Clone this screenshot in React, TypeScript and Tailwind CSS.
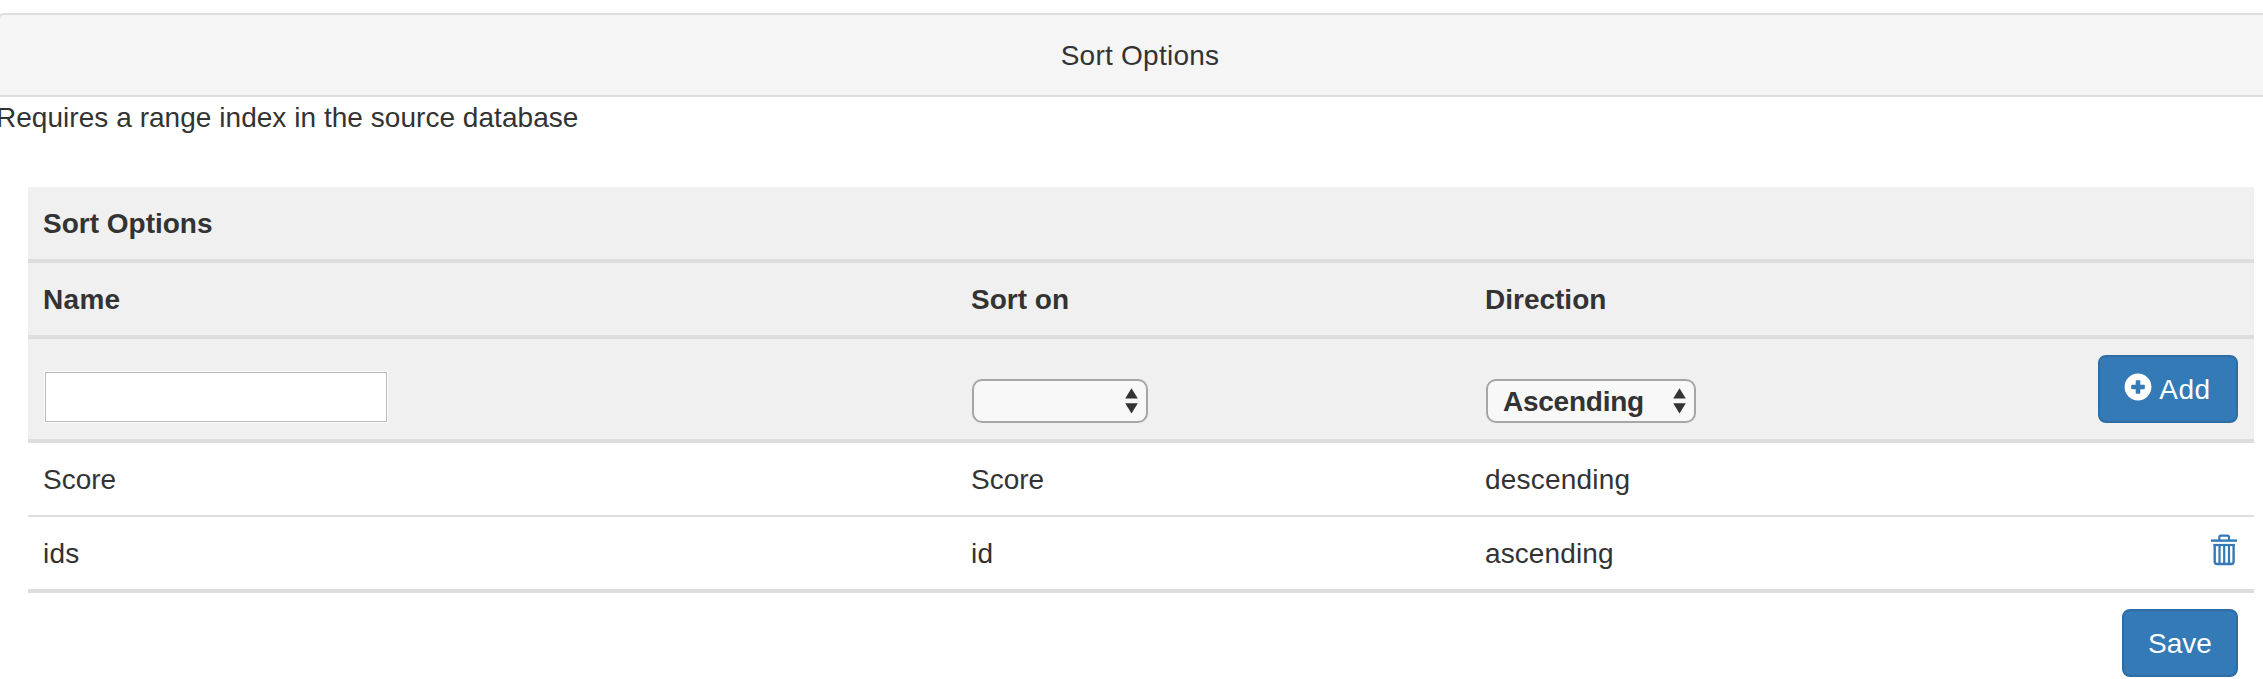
import type { ReactNode } from "react";

const GRID = "grid grid-cols-[928px_514px_1fr_auto] pr-4 pl-[15px]";

function UpDown() {
  return (
    <svg width="13" height="26" viewBox="0 0 13 26" fill="#333">
      <path d="M6.5 0.3 12.800 10.400H.2z" />
      <path d="M6.5 25.500 12.800 15.300H.2z" />
    </svg>
  );
}

function PlusCircle() {
  return (
    <svg className="mb-[4px]" width="28" height="28" viewBox="0 0 28 28">
      <circle cx="14" cy="14" r="13.4" fill="#fff" />
      <path
        d="M11.700 8q0-.8.8-.8h3q.8 0 .8.8v3.700h3.700q.8 0 .8.8v3q0 .8-.8.8h-3.700v3.700q0 .8-.8.8h-3q-.8 0-.8-.8v-3.700h-3.700q-.8 0-.8-.8v-3q0-.8.8-.8h3.700z"
        fill="#337ab7"
      />
    </svg>
  );
}

function Trash() {
  return (
    <svg width="26" height="32" viewBox="0 0 26 32" fill="none" stroke="#337ab7" strokeWidth="2.2">
      <path d="M0 6.600h26" strokeWidth="2.400" />
      <path d="M8.300 6V3.400Q8.300 1.700 10 1.700h6.300q1.700 0 1.700 1.700V6" />
      <path d="M2.600 11h21.200" />
      <path d="M3.700 10v17.500q0 2.500 2.300 2.500h14.300q2.300 0 2.300-2.500V10" strokeWidth="2.400" />
      <path d="M8.500 11v19M13.200 11v19M18 11v19" />
    </svg>
  );
}

function Picker({ label, className }: { label?: string; className: string }) {
  return (
    <button
      className={`${className} ml-px flex h-[44px] items-center justify-between rounded-[10px] border-2 border-[#a6a6a6] bg-[#f8f8f8] pr-[8px] pl-[15px] font-bold`}
    >
      <span className="pt-px leading-[40px] tracking-[-0.25px]">{label}</span>
      <UpDown />
    </button>
  );
}

function Primary({ children, className }: { children: ReactNode; className: string }) {
  return (
    <button
      className={`${className} flex h-[68px] items-center justify-center rounded-[8px] border-2 border-[#2e6da4] bg-[#337ab7] text-white`}
    >
      {children}
    </button>
  );
}

export default function App() {
  return (
    <div className="h-[679px] overflow-hidden bg-white pt-[13px] font-['Liberation_Sans',Arial,sans-serif] text-[28px] leading-[40px] text-[#333]">
      <header className="-ml-[2px] flex h-[84px] items-center justify-center rounded-tl-[6px] border-y-2 border-l-2 border-[#ddd] bg-[#f5f5f5] pt-px pl-[17px] tracking-[0.25px]">
        Sort Options
      </header>
      <p className="-ml-[4px] h-[90px] pt-px tracking-[0.04px]">
        Requires a range index in the source database
      </p>

      <section className="mr-[9px] ml-[28px]">
        <div className="bg-[#f0f0f0]">
          <div className="h-[76px] border-b-4 border-[#ddd] px-[15px] pt-[17px] font-bold">Sort Options</div>
          <div className={`${GRID} h-[76px] border-b-4 border-[#ddd] pt-[17px] font-bold`}>
            <span className="tracking-[0.3px]">Name</span>
            <span>Sort on</span>
            <span>Direction</span>
          </div>
          <div className={`${GRID} h-[104px] items-end border-b-4 border-[#ddd] pb-4`}>
            <div className="ml-px h-[52px] w-[344px] border border-white">
              <input className="block h-[50px] w-[342px] border border-[#b8b8b8] bg-white px-2" />
            </div>
            <Picker className="w-[176px]" />
            <Picker className="w-[210px]" label="Ascending" />
            <Primary className="w-[140px] gap-[7px] pr-px">
              <PlusCircle />
              <span className="pt-px tracking-[0.5px]">Add</span>
            </Primary>
          </div>
        </div>
        <div className={`${GRID} h-[74px] border-b-2 border-[#ddd] pt-[17px]`}>
          <span>Score</span>
          <span>Score</span>
          <span className="tracking-[0.2px]">descending</span>
        </div>
        <div className={`${GRID} h-[76px] border-b-4 border-[#ddd] pt-[17px]`}>
          <span className="tracking-[0.2px]">ids</span>
          <span className="tracking-[0.2px]">id</span>
          <span className="tracking-[0.1px]">ascending</span>
          <span className="pr-[1px]">
            <Trash />
          </span>
        </div>
        <div className="flex justify-end px-4 pt-4">
          <Primary className="w-[116px]">
            <span className="pt-px">Save</span>
          </Primary>
        </div>
      </section>
    </div>
  );
}
